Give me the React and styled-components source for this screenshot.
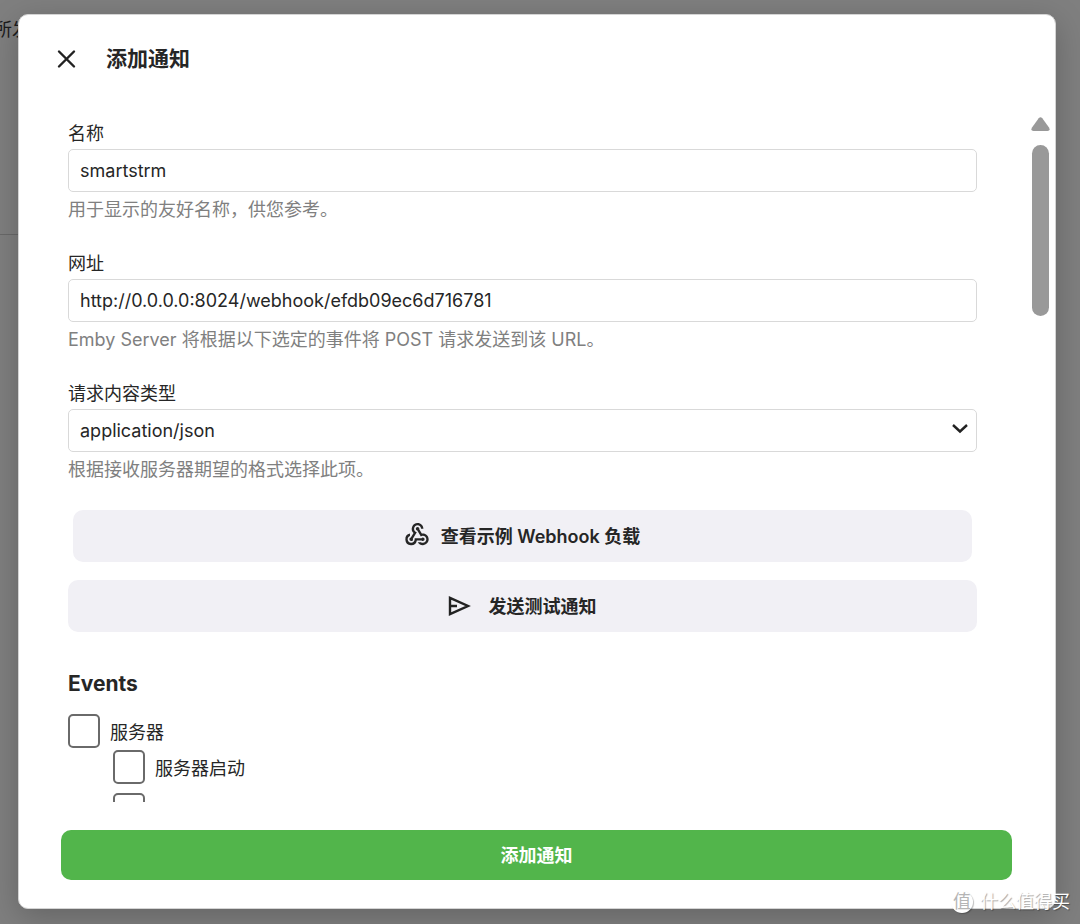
import React from "react";
import styled, { createGlobalStyle } from "styled-components";
import { MdWebhook } from "react-icons/md";

const GlobalStyle = createGlobalStyle`
  *, *::before, *::after { box-sizing: border-box; }
  body {
    margin: 0;
    background: #7f7f7f;
    color: #262626;
    font-family: Inter, "Noto Sans CJK SC", sans-serif;
    font-size: 18px;
    line-height: 24px;
  }
  button, input, select { font: inherit; color: inherit; }
`;

const Page = styled.div`
  position: relative;
  height: 100vh;
  min-height: 480px;
  overflow: hidden;
`;

const Backdrop = styled.div`
  position: absolute;
  inset: 0 auto auto 0;
  width: 50%;
  height: 235px;
  padding: 18px 0;
  border-bottom: 1px solid #696969;
  color: #1c1c1c;
  white-space: nowrap;
  text-indent: -6px;
`;

const Overlay = styled.div`
  position: relative;
  display: flex;
  height: 100%;
  padding: 14px 24px 15px 18px;
`;

const Dialog = styled.section`
  display: flex;
  flex: 1;
  flex-direction: column;
  min-width: 0;
  background: #fff;
  border: 1px solid #d4d4d4;
  border-radius: 10px;
  box-shadow: 0 8px 32px rgba(0, 0, 0, 0.22);
`;

const Header = styled.header`
  display: flex;
  align-items: center;
  gap: 25px;
  height: 87px;
  padding: 0 34px;
`;

const IconButton = styled.button`
  display: flex;
  padding: 0;
  border: 0;
  background: none;
`;

const Title = styled.h1`
  margin: 0;
  font-size: 21px;
  line-height: 24px;
  font-weight: 700;
`;

const Body = styled.div`
  display: flex;
  flex: 1;
  gap: 54px;
  min-height: 0;
  padding: 0 5px 0 49px;
`;

const Form = styled.form`
  flex: 1;
  min-width: 0;
  padding-top: 20px;
  overflow: hidden;
`;

const Field = styled.div`
  display: flex;
  flex-direction: column;
`;

const FieldLabel = styled.label`
  height: 27px;
`;

const TextInput = styled.input`
  width: 100%;
  height: 43px;
  padding: 0 11px;
  border: 1px solid #d9d9d9;
  border-radius: 5px;
  background: #fff;
  outline: 0;
`;

const SelectWrap = styled.div`
  position: relative;
`;

const Select = styled(TextInput).attrs({ as: "select" })`
  display: block;
  appearance: none;
`;

const Chevron = styled.svg`
  position: absolute;
  top: 11px;
  right: 8px;
  pointer-events: none;
`;

const Help = styled.p`
  margin: 0;
  padding: 7px 0 8px;
  line-height: 22px;
  color: #808080;
`;

const Fields = styled.div`
  display: flex;
  flex-direction: column;
  gap: 23px;
`;

const Actions = styled.div`
  display: flex;
  flex-direction: column;
  gap: 18px;
  margin-top: 21px;
`;

const ActionButton = styled.button`
  display: flex;
  align-items: center;
  justify-content: center;
  gap: ${(p) => p.$gap}px;
  height: 52px;
  margin: 0 ${(p) => p.$inset || 0}px;
  padding: 1px 8px 0 6px;
  border: 0;
  border-radius: 10px;
  background: #f1f0f5;
  font-weight: 600;
`;

const SectionTitle = styled.h2`
  margin: 40px 0 18px;
  font-size: 21px;
  line-height: 24px;
  font-weight: 700;
`;

const CheckRow = styled.label`
  display: flex;
  align-items: center;
  gap: 10px;
  height: 34px;
`;

const CheckText = styled.span`
  padding-top: 3px;
`;

const Checkbox = styled.input.attrs({ type: "checkbox" })`
  appearance: none;
  width: 32px;
  height: 34px;
  margin: 0;
  border: 2px solid #6a6a6a;
  border-radius: 5px;
  background: #fff;
  &:checked { background: #52b54b; }
`;

const SubList = styled.div`
  display: flex;
  flex-direction: column;
  gap: 9px;
  margin-top: 2px;
  padding-left: 45px;
`;

const ScrollRail = styled.div`
  display: flex;
  flex-direction: column;
  align-items: center;
  gap: 14px;
  width: 19px;
  padding-top: 15px;
`;

const ScrollThumb = styled.div`
  width: 17px;
  height: 25%;
  border-radius: 9px;
  background: #999;
`;

const Footer = styled.footer`
  display: flex;
  padding: 28px 43px 28px 42px;
`;

const SubmitButton = styled.button`
  flex: 1;
  height: 50px;
  padding-top: 2px;
  border: 0;
  border-radius: 10px;
  background: #52b54b;
  color: #fff;
  font-weight: 600;
`;

const Watermark = styled.div`
  position: absolute;
  right: 10px;
  bottom: 10px;
  display: flex;
  align-items: center;
  gap: 7px;
  color: #fff;
  text-shadow: 1px 1px 1px rgba(0, 0, 0, 0.35);
`;

const Badge = styled.span`
  width: 22px;
  height: 22px;
  border-radius: 50%;
  background: #fff;
  box-shadow: 1px 1px 1px rgba(0, 0, 0, 0.25);
  color: #b5b5b5;
  font-size: 18px;
  line-height: 22px;
  text-align: center;
  text-shadow: none;
`;

const serverEvents = ["服务器启动", "服务器需要重启"];

export default function App() {
  return (
    <Page>
      <GlobalStyle />
      <Backdrop aria-hidden="true">所发</Backdrop>
      <Overlay>
        <Dialog role="dialog" aria-labelledby="dialog-title">
          <Header>
            <IconButton type="button" aria-label="关闭">
              <svg width="28" height="28" viewBox="0 0 28 28" fill="none" stroke="#222" strokeWidth="2.4" strokeLinecap="round">
                <path d="M6 6.5 21 21.5M21 6.5 6 21.5" />
              </svg>
            </IconButton>
            <Title id="dialog-title">添加通知</Title>
          </Header>
          <Body>
            <Form id="notification-form">
              <Fields>
                <Field>
                  <FieldLabel htmlFor="name">名称</FieldLabel>
                  <TextInput id="name" defaultValue="smartstrm" />
                  <Help>用于显示的友好名称，供您参考。</Help>
                </Field>
                <Field>
                  <FieldLabel htmlFor="url">网址</FieldLabel>
                  <TextInput id="url" defaultValue="http://0.0.0.0:8024/webhook/efdb09ec6d716781" />
                  <Help>Emby Server 将根据以下选定的事件将 POST 请求发送到该 URL。</Help>
                </Field>
                <Field>
                  <FieldLabel htmlFor="content-type">请求内容类型</FieldLabel>
                  <SelectWrap>
                    <Select id="content-type" defaultValue="application/json">
                      <option>application/json</option>
                    </Select>
                    <Chevron width="18" height="18" viewBox="0 0 18 18" fill="none" stroke="#222" strokeWidth="2.4">
                      <path d="m2 5 7 6.5L16 5" />
                    </Chevron>
                  </SelectWrap>
                  <Help>根据接收服务器期望的格式选择此项。</Help>
                </Field>
              </Fields>
              <Actions>
                <ActionButton type="button" $gap={10} $inset={5}>
                  <MdWebhook size={28} viewBox="0 2 24 24" />
                  查看示例 Webhook 负载
                </ActionButton>
                <ActionButton type="button" $gap={16}>
                  <svg width="26" height="26" viewBox="0 0 26 26" fill="none" stroke="#222" strokeWidth="2.4">
                    <path d="M3 3.9v16.2L21 12ZM3 12h7" />
                  </svg>
                  发送测试通知
                </ActionButton>
              </Actions>
              <SectionTitle>Events</SectionTitle>
              <CheckRow>
                <Checkbox />
                <CheckText>服务器</CheckText>
              </CheckRow>
              <SubList>
                {serverEvents.map((name) => (
                  <CheckRow key={name}>
                    <Checkbox />
                    <CheckText>{name}</CheckText>
                  </CheckRow>
                ))}
              </SubList>
            </Form>
            <ScrollRail aria-hidden="true">
              <svg width="19" height="14" viewBox="0 0 19 14" fill="#999">
                <path d="M7.7 1.2Q9.5-.8 11.3 1.2L18 10.5Q19.8 14 16.5 14H2.5Q-.8 14 1 10.5Z" />
              </svg>
              <ScrollThumb />
            </ScrollRail>
          </Body>
          <Footer>
            <SubmitButton type="submit" form="notification-form">添加通知</SubmitButton>
          </Footer>
        </Dialog>
      </Overlay>
      <Watermark>
        <Badge>值</Badge>
        什么值得买
      </Watermark>
    </Page>
  );
}
